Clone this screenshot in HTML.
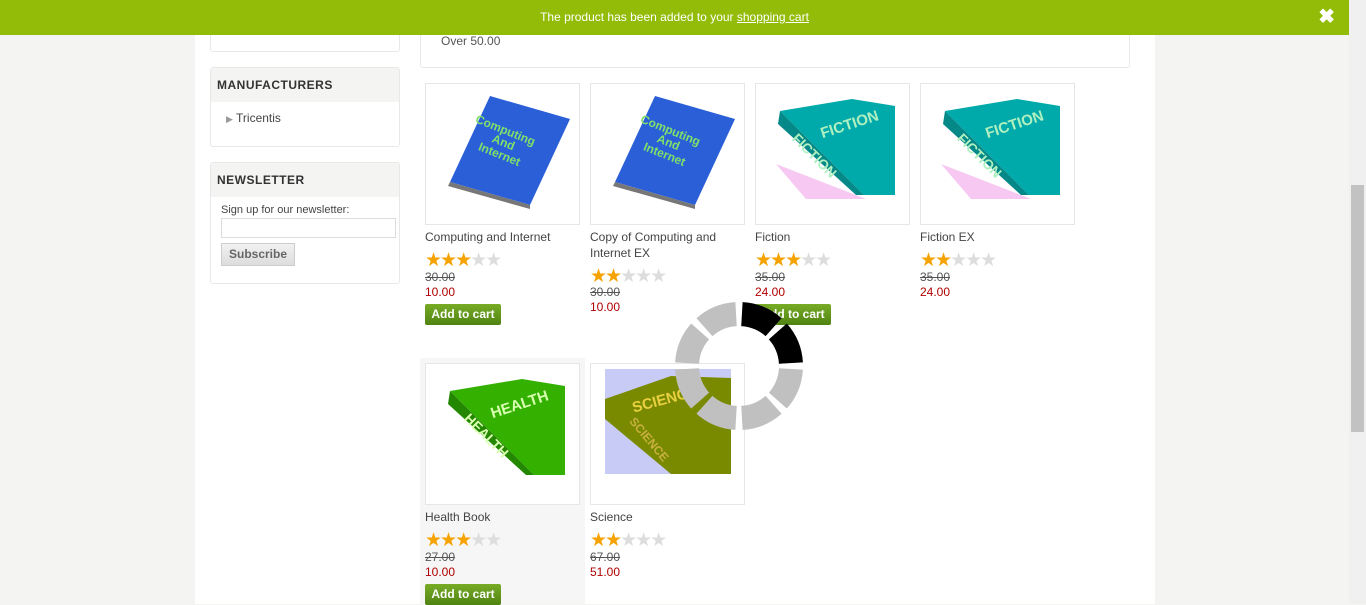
<!DOCTYPE html>
<html><head><meta charset="utf-8"><style>
*{margin:0;padding:0;box-sizing:border-box}
body{width:1366px;height:604px;overflow:hidden;background:#f4f4f3;font-family:"Liberation Sans",sans-serif;font-size:12px;color:#444;position:relative}
.wrap{position:absolute;left:195px;top:0;width:960px;height:604px;background:#fff}
.bar{position:absolute;left:0;top:0;width:1349px;height:35px;background:#92bc07;color:#fff;text-align:center;line-height:35px;font-size:12px;z-index:5}
.bar u{color:#fff}
.x{position:absolute;right:14px;top:0;font-size:20px;font-weight:bold}
.sb{position:absolute;left:1349px;top:0;width:17px;height:604px;background:#f0f0f0}
.thumb{position:absolute;left:1351px;top:185px;width:13px;height:247px;background:#c2c2c2}
.box{position:absolute;border:1px solid #e8e8e8;border-radius:3px;background:#fff}
.box h3{background:#f4f4f3;font-size:12px;font-weight:bold;color:#333;padding:10px 6px;letter-spacing:.5px}
.a{position:absolute}
.img{position:absolute;width:155px;height:142px;border:1px solid #e6e6e6;background:#fff;overflow:hidden}
.t{position:absolute;font-size:12px;color:#444;line-height:16px;width:150px}
.old{position:absolute;text-decoration:line-through;color:#555}
.new{position:absolute;color:#b00000}
.btn{position:absolute;width:76px;height:21px;background:linear-gradient(#78ac26,#4f8312);color:#fff;font-weight:bold;font-size:12px;line-height:21px;text-align:center;border-radius:2px}
.st{position:absolute;font-size:19px;letter-spacing:-2px;line-height:16px}
.st b{color:#f5a300;font-weight:normal}
.st i{color:#ddd;font-style:normal}
</style></head><body>
<div class="wrap"></div>
<div class="bar">The product has been added to your <u>shopping cart</u><span class="x">✖</span></div>
<div class="sb"></div><div class="thumb"></div>

<div class="box" style="left:210px;top:20px;width:190px;height:32px"></div>
<div class="box" style="left:210px;top:67px;width:190px;height:80px"><h3>MANUFACTURERS</h3>
<div style="padding:9px 0 0 15px;color:#444"><span style="color:#999;font-size:9px">▶</span> Tricentis</div></div>
<div class="box" style="left:210px;top:162px;width:190px;height:122px"><h3>NEWSLETTER</h3>
<div style="padding:7px 0 0 10px;font-size:11px">Sign up for our newsletter:</div>
<div style="margin:2px 0 0 10px;width:175px;height:20px;border:1px solid #ddd"></div>
<div style="margin:5px 0 0 10px;width:74px;height:23px;border:1px solid #ccc;background:linear-gradient(#f2f2f2,#ddd);color:#666;font-weight:bold;font-size:12px;line-height:21px;text-align:center">Subscribe</div></div>

<div class="box" style="left:420px;top:20px;width:710px;height:48px"><div style="position:absolute;left:20px;top:13px;color:#555">Over 50.00</div></div>

<div class="a" style="left:420px;top:358px;width:165px;height:246px;background:#f6f6f6"></div>

<div class="img" style="left:425px;top:83px"><svg width="155" height="142"><polygon points="30,98 70,12 150,35 110,121" fill="#2a5fd8" transform="translate(-6,0)"/><polygon points="24,98 104,121 104,125 22,102" fill="#777"/><text x="78" y="50" fill="#7fe06a" font-size="12" font-weight="bold" transform="rotate(22 78 50)" text-anchor="middle">Computing</text><text x="76" y="62" fill="#7fe06a" font-size="12" font-weight="bold" transform="rotate(22 76 62)" text-anchor="middle">And</text><text x="72" y="74" fill="#7fe06a" font-size="12" font-weight="bold" transform="rotate(22 72 74)" text-anchor="middle">Internet</text></svg></div>
<div class="img" style="left:590px;top:83px"><svg width="155" height="142"><polygon points="30,98 70,12 150,35 110,121" fill="#2a5fd8" transform="translate(-6,0)"/><polygon points="24,98 104,121 104,125 22,102" fill="#777"/><text x="78" y="50" fill="#7fe06a" font-size="12" font-weight="bold" transform="rotate(22 78 50)" text-anchor="middle">Computing</text><text x="76" y="62" fill="#7fe06a" font-size="12" font-weight="bold" transform="rotate(22 76 62)" text-anchor="middle">And</text><text x="72" y="74" fill="#7fe06a" font-size="12" font-weight="bold" transform="rotate(22 72 74)" text-anchor="middle">Internet</text></svg></div>
<div class="img" style="left:755px;top:83px"><svg width="155" height="142"><polygon points="20,80 110,115 50,115" fill="#f6c8f2"/><polygon points="24,27 96,15 139,22 139,111 108,111" fill="#00aaaa"/><polygon points="24,27 108,111 100,111 22,40" fill="#058888"/><text x="95" y="45" fill="#aef0c0" font-size="15" font-weight="bold" transform="rotate(-18 95 45)" text-anchor="middle">FICTION</text><text x="55" y="75" fill="#aef0c0" font-size="14" font-weight="bold" transform="rotate(45 55 75)" text-anchor="middle">FICTION</text></svg></div>
<div class="img" style="left:920px;top:83px"><svg width="155" height="142"><polygon points="20,80 110,115 50,115" fill="#f6c8f2"/><polygon points="24,27 96,15 139,22 139,111 108,111" fill="#00aaaa"/><polygon points="24,27 108,111 100,111 22,40" fill="#058888"/><text x="95" y="45" fill="#aef0c0" font-size="15" font-weight="bold" transform="rotate(-18 95 45)" text-anchor="middle">FICTION</text><text x="55" y="75" fill="#aef0c0" font-size="14" font-weight="bold" transform="rotate(45 55 75)" text-anchor="middle">FICTION</text></svg></div>
<div class="img" style="left:425px;top:363px"><svg width="155" height="142"><polygon points="24,27 96,15 139,22 139,111 108,111" fill="#33b000"/><polygon points="24,27 108,111 100,111 22,40" fill="#238800"/><text x="95" y="45" fill="#d8ffb0" font-size="15" font-weight="bold" transform="rotate(-18 95 45)" text-anchor="middle">HEALTH</text><text x="57" y="75" fill="#d8ffb0" font-size="14" font-weight="bold" transform="rotate(45 57 75)" text-anchor="middle">HEALTH</text></svg></div>
<div class="img" style="left:590px;top:363px"><svg width="155" height="142"><rect x="14" y="5" width="126" height="105" fill="#c8cbf6"/><polygon points="14,35 80,12 140,14 140,110 80,110 14,55" fill="#7a8a00"/><text x="75" y="40" fill="#e8d040" font-size="15" font-weight="bold" transform="rotate(-15 75 40)" text-anchor="middle">SCIENCE</text><text x="55" y="78" fill="#c8b040" font-size="12" font-weight="bold" transform="rotate(50 55 78)" text-anchor="middle">SCIENCE</text></svg></div>

<div class="t" style="left:425px;top:229px">Computing and Internet</div>
<div class="st" style="left:425px;top:253px"><b>★★★</b><i>★★</i></div>
<div class="old" style="left:425px;top:270px">30.00</div><div class="new" style="left:425px;top:285px">10.00</div>
<div class="btn" style="left:425px;top:304px">Add to cart</div>

<div class="t" style="left:590px;top:229px">Copy of Computing and Internet EX</div>
<div class="st" style="left:590px;top:269px"><b>★★</b><i>★★★</i></div>
<div class="old" style="left:590px;top:285px">30.00</div><div class="new" style="left:590px;top:300px">10.00</div>

<div class="t" style="left:755px;top:229px">Fiction</div>
<div class="st" style="left:755px;top:253px"><b>★★★</b><i>★★</i></div>
<div class="old" style="left:755px;top:270px">35.00</div><div class="new" style="left:755px;top:285px">24.00</div>
<div class="btn" style="left:755px;top:304px">Add to cart</div>

<div class="t" style="left:920px;top:229px">Fiction EX</div>
<div class="st" style="left:920px;top:253px"><b>★★</b><i>★★★</i></div>
<div class="old" style="left:920px;top:270px">35.00</div><div class="new" style="left:920px;top:285px">24.00</div>

<div class="t" style="left:425px;top:509px">Health Book</div>
<div class="st" style="left:425px;top:533px"><b>★★★</b><i>★★</i></div>
<div class="old" style="left:425px;top:550px">27.00</div><div class="new" style="left:425px;top:565px">10.00</div>
<div class="btn" style="left:425px;top:584px">Add to cart</div>

<div class="t" style="left:590px;top:509px">Science</div>
<div class="st" style="left:590px;top:533px"><b>★★</b><i>★★★</i></div>
<div class="old" style="left:590px;top:550px">67.00</div><div class="new" style="left:590px;top:565px">51.00</div>

<svg class="a" style="left:669px;top:296px" width="140" height="140" viewBox="0 0 140 140">
<g transform="rotate(-90 70 70)">
<circle cx="70" cy="70" r="52" fill="none" stroke="#c0c0c0" stroke-width="24" stroke-dasharray="34.8 6" stroke-dashoffset="-3"/>
<circle cx="70" cy="70" r="52" fill="none" stroke="#000" stroke-width="24" stroke-dasharray="34.8 6 34.8 300" stroke-dashoffset="-3"/>
</g></svg>
</body></html>
